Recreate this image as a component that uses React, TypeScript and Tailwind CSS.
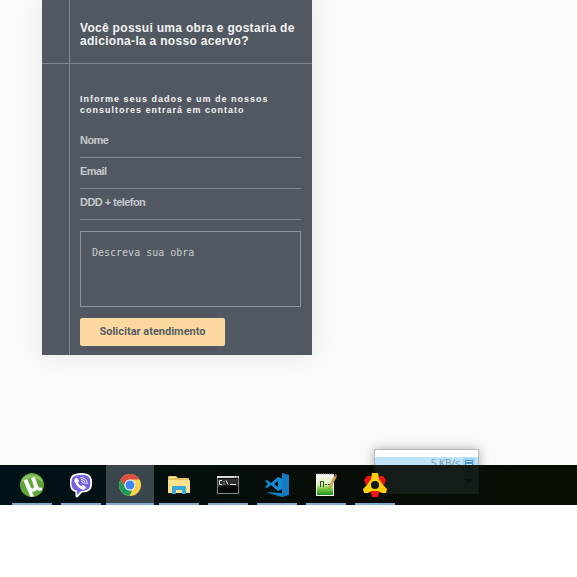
import React from "react";

function Field({ id, label, type }: { id: string; label: string; type: string }) {
  return (
    <div className="h-[31px] border-b border-[#85888d]">
      <input
        id={id}
        type={type}
        aria-label={label}
        placeholder={label}
        className="block h-[26px] w-full bg-transparent text-[11px] font-bold tracking-tighter text-[#c5c8cc] outline-none placeholder:text-[#c5c8cc]"
      />
    </div>
  );
}

function UTorrentIcon() {
  return (
    <svg width="26" height="26" viewBox="0 0 26 26" aria-hidden="true">
      <circle cx="13" cy="13" r="12" fill="#5ea53a" />
      <path d="M1.500 11A12 12 0 0 1 24.500 11Q13 1 1.500 11Z" fill="#8bc163" />
      <path d="M4.500 8.500 8.200 7l3.600 8.500c.9 1.800 3.500 1.300 3-1.200L12 6l3.700-1 3.300 9c.7 1.800 2 2 3.800 1.500l.3 2.600c-2.300 1.100-4 .8-5.300-.6-.8 2-3 2.700-4.900 2l2 5-3.500.2Z" fill="#fff" />
    </svg>
  );
}

function ViberIcon() {
  return (
    <svg width="26" height="26" viewBox="0 0 26 26" aria-hidden="true">
      <path d="M7 2C11 .7 16 .8 19.500 2 23 3.500 24.500 7 24 12.500c-.4 5.200-3 7.800-10 8L10 25c-1 .8-2.500.3-2.500-1v-4C3.800 19 2.200 17 2 12 1.800 6 3 3.200 7 2Z" fill="#fff" />
      <path d="M8 3.500C12 2.500 16 2.600 19 3.700c2.800 1 3.700 4.500 3.200 9-.4 4-2.500 6.200-9 6.300L9 23v-4.400c-3.700-.6-5.300-3-5.500-6.600C3.300 7 4.500 4.400 8 3.500Z" fill="#7561e8" />
      <path d="M8 6c-1.400.8-2 1.900-1.400 3.500 1.500 4 4 6.500 7.700 8 1.500.5 2.500-.2 3.400-1.600.4-.9-.1-1.500-2.400-2.700-.7-.4-1.200 0-1.900.8-1.800-.6-2.900-1.700-3.500-3.500 1.100-.7 1.300-1.200.7-2.100C9.700 6.500 8.900 5.500 8 6Z" fill="#fff" />
      <path d="M13 5.500c3.900 0 6.100 2.500 6.100 6.200M13.300 7.500c2.500.2 3.700 1.600 3.800 3.900M13.500 9.300c1 .1 1.500.7 1.600 1.700" fill="none" stroke="#fff" strokeWidth="1" strokeLinecap="round" />
    </svg>
  );
}

function ChromeIcon() {
  return (
    <svg width="24" height="24" viewBox="0 0 24 24" aria-hidden="true">
      <circle cx="12" cy="12" r="11" fill="#fdd04b" />
      <path d="M2.500 6.500A11 11 0 0 1 21.500 6.500H12A5.500 5.500 0 0 0 7.200 14.700Z" fill="#dc4c40" />
      <path d="M2.500 6.500 7.200 14.700A5.500 5.500 0 0 0 14.300 17L11.500 23A11 11 0 0 1 2.500 6.500Z" fill="#1c9d5b" />
      <circle cx="12" cy="12" r="5.500" fill="#f5f7f5" />
      <circle cx="12" cy="12" r="4.500" fill="#4285f4" />
    </svg>
  );
}

function FolderIcon() {
  return (
    <svg width="24" height="22" viewBox="0 0 24 22" aria-hidden="true">
      <path d="M1 3q0-1 1-1h7l2 2h10q1 0 1 1v3H1Z" fill="#e5c45f" />
      <path d="M3 3h5v1H3Z" fill="#fff3c0" />
      <path d="M1 6h21q1 0 1 1v12H1Z" fill="#ffe28f" />
      <path d="M5 20v-7q0-1 1-1h12q1 0 1 1v7h-4v-4H9v4Z" fill="#38aadb" />
    </svg>
  );
}

function TerminalIcon() {
  return (
    <svg width="24" height="20" viewBox="0 0 24 20" aria-hidden="true">
      <path d="M1.500 1.500h21v17h-21Z" fill="#080808" stroke="#858585" />
      <path d="M1 1h22v2H1Z" fill="#d8dadc" />
      <path d="M2 4h20v7Q12 9 2 12Z" fill="#303030" />
      <path d="M6 5.500H3.500v4H6M8 6v1M8 8.500v1M10 5.500l2 4M14 9.500h6" fill="none" stroke="#eee" />
      <path d="M18 2h1M20 2h2" stroke="#586070" />
    </svg>
  );
}

function CodeIcon() {
  return (
    <svg width="26" height="26" viewBox="0 0 26 26" aria-hidden="true">
      <path d="M18 1 25 3v20l-7 2-14-4v-1l14 1Z" fill="#147bc3" />
      <path d="M1 9 3 8l4 3 7-6 4 1.500V17l-4 2-7-6-4 3-2-1 3-3Zm9 3 4 3V9Z" fill="#168bd5" fillRule="evenodd" />
    </svg>
  );
}

function NotepadIcon() {
  return (
    <svg width="24" height="26" viewBox="0 0 24 26" aria-hidden="true">
      <defs>
        <linearGradient id="notepad-fill" x2="0" y2="1">
          <stop stopColor="#f7f9ed" />
          <stop offset=".45" stopColor="#d6eeb3" />
          <stop offset=".65" stopColor="#83cf45" />
          <stop offset="1" stopColor="#218e22" />
        </linearGradient>
      </defs>
      <path d="M2 2h18v22H2Z" fill="#f3f5f1" />
      <path d="M3 4h16v19H3Z" fill="url(#notepad-fill)" />
      <path d="M3 2h16" stroke="#aaa" strokeDasharray="1 1" />
      <path d="M6.500 15V9.500h3V15M11 12.500h2M14 12.500h2" fill="none" stroke="#35442d" strokeWidth="1" />
      <path d="m15 17 .5-4 5-9 2 1-5 9Z" fill="#edae4c" stroke="#8d743f" strokeWidth=".5" />
      <path d="m20.500 4 .8-2 1.700 1-.5 2Z" fill="#d35b42" />
    </svg>
  );
}

function GearIcon() {
  return (
    <svg width="26" height="26" viewBox="0 0 26 26" aria-hidden="true">
      <path d="m2 8 3-4h4l3 6-5 4-3-1ZM24 8l-3-4h-4l-3 6 5 4 3-1ZM8 17h10l-2 8h-6Z" fill="#ef1515" />
      <path d="M10 1h6l1 6 4 6 4 4-1 4h-4l-4-2h-6l-4 2H2l-1-4 4-4 4-6Z" fill="#ffcf08" />
      <circle cx="13" cy="13" r="4" fill="#101615" />
    </svg>
  );
}

const apps = [
  { name: "µTorrent", Icon: UTorrentIcon },
  { name: "Viber", Icon: ViberIcon },
  { name: "Chrome", Icon: ChromeIcon, active: true },
  { name: "Explorer", Icon: FolderIcon },
  { name: "Terminal", Icon: TerminalIcon },
  { name: "Visual Studio Code", Icon: CodeIcon },
  { name: "Notepad++", Icon: NotepadIcon },
  { name: "Download", Icon: GearIcon },
];

function NetworkPopup() {
  return (
    <div className="absolute -top-4 left-[374px] h-[45px] w-[105px] border border-[#b4b8ba] bg-white pt-[7px] shadow-[0_0_10px_rgba(0,0,0,0.3)]">
      <div className="flex h-full items-start justify-end gap-[3px] bg-[#bde3fa] pr-[3px] font-['Open_Sans',sans-serif] text-[10px] leading-3 text-[#7d95a2]">
        <span>5 KB/s</span>
        <svg width="12" height="28" viewBox="0 0 12 28" aria-hidden="true">
          <path d="M0 1h12v27H0Z" fill="#9fd5f2" />
          <path d="M2 3h8v7l-4 3-4-3Z" fill="#5095c1" />
          <path d="M3 4.500h6M3 7.500h6" stroke="#c2e4f6" />
          <path d="M2 22h8l-4 4Z" fill="#174057" />
        </svg>
      </div>
    </div>
  );
}

export default function App() {
  return (
    <div className="min-h-screen overflow-hidden bg-white font-['Liberation_Sans',Arial,sans-serif]">
      <main className="bg-[#fafafa] pb-[110px] pl-[42px]">
        <section className="w-[270px] bg-[#525861] text-[#f2f3f4] shadow-[0_0_24px_rgba(0,0,0,0.08)]">
          <div className="ml-[27px] border-l border-[#85868a]">
            <header className="-ml-7 border-b border-[#85868a] pt-[22px] pb-[15px] pl-[38px]">
              <h1 className="text-[12px] leading-[13px] font-bold tracking-wide">
                Você possui uma obra e gostaria de<br />adiciona-la a nosso acervo?
              </h1>
            </header>
            <form className="pt-[30px] pr-[11px] pb-[9px] pl-[10px]" onSubmit={(event) => event.preventDefault()}>
              <p className="mb-[11px] text-[9px] leading-[11px] font-bold tracking-[1px]">
                Informe seus dados e um de nossos<br />consultores entrará em contato
              </p>
              <Field id="name" label="Nome" type="text" />
              <Field id="email" label="Email" type="email" />
              <Field id="phone" label="DDD + telefon" type="tel" />
              <textarea
                id="description"
                aria-label="Descreva sua obra"
                placeholder="Descreva sua obra"
                className="mt-[11px] block h-[76px] w-full resize-none border border-[#929397] bg-transparent px-[11px] py-[15px] font-['DejaVu_Sans_Mono',monospace] text-[10px] leading-3 text-[#c8ccd0] outline-none placeholder:text-[#c8ccd0]"
              />
              <button type="submit" className="mt-[11px] block h-[28px] w-[145px] rounded-[2px] bg-[#fdd99f] font-['Roboto',sans-serif] text-[11px] font-bold text-[#575d65]">
                Solicitar atendimento
              </button>
            </form>
          </div>
        </section>
      </main>
      <div className="relative bg-[#060b05]">
        <NetworkPopup />
        <nav aria-label="Aplicativos" className="relative flex h-10 gap-px bg-linear-to-r from-[#00131b]/92 via-[#070d07]/94 to-[#070f04]/92 pl-2">
          {apps.map(({ name, Icon, active }) => (
            <button
              key={name}
              type="button"
              aria-label={name}
              className={`flex w-12 flex-col items-center ${active ? "bg-[#39464b]" : ""}`}
            >
              <span className="flex h-[38px] items-center pt-px"><Icon /></span>
              <span className={`h-[2px] bg-[#81add3] ${active ? "w-12" : "w-10"}`} />
            </button>
          ))}
        </nav>
      </div>
    </div>
  );
}
